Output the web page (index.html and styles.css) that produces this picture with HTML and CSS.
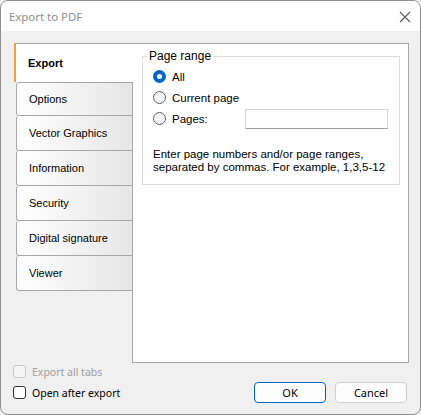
FILE: index.html
```html
<!DOCTYPE html>
<html lang="en">
<head>
  <meta charset="UTF-8" />
  <title>Export to PDF</title>
  <link rel="stylesheet" href="styles.css">
</head>
<body>
  <div class="window">
    <div class="titlebar">
      <span class="title">Export to PDF</span>
      <svg class="close" width="12" height="12" viewBox="0 0 12 12">
        <path d="M1 1 L11 11 M11 1 L1 11" stroke="#5c5c5c" stroke-width="1.1" fill="none"/>
      </svg>
    </div>

    <div class="client">
      <div class="main">
        <div class="tab-strip">
          <div class="tab active">Export</div>
          <div class="tab">Options</div>
          <div class="tab">Vector Graphics</div>
          <div class="tab">Information</div>
          <div class="tab">Security</div>
          <div class="tab">Digital signature</div>
          <div class="tab">Viewer</div>
        </div>

        <div class="panel">
          <fieldset class="group">
            <legend>Page range</legend>
            <label class="radio-row">
              <span class="radio checked"></span>All
            </label>
            <label class="radio-row">
              <span class="radio"></span>Current page
            </label>
            <label class="radio-row">
              <span class="radio"></span>Pages:
              <span class="text-input"></span>
            </label>
            <p class="hint">Enter page numbers and/or page ranges,<br>separated by commas. For example, 1,3,5-12</p>
          </fieldset>
        </div>
      </div>

      <div class="footer">
        <div class="checks">
          <label class="check-row disabled"><span class="checkbox"></span>Export all tabs</label>
          <label class="check-row"><span class="checkbox"></span>Open after export</label>
        </div>
        <div class="buttons">
          <button class="btn default">OK</button>
          <button class="btn">Cancel</button>
        </div>
      </div>
    </div>
  </div>
</body>
</html>
```

FILE: styles.css
```css
* {
  box-sizing: border-box;
}

body {
  margin: 0;
  background: #f0f0f0;
  font-family: 'Liberation Sans', Arial, sans-serif;
  font-size: 11px;
  color: #000;
}

.window {
  width: 421px;
  height: 415px;
  border: 1px solid #8e8e8e;
  border-radius: 8px;
  overflow: hidden;
  background: #f0f0f0;
  display: flex;
  flex-direction: column;
}

.titlebar {
  height: 30px;
  background: #fff;
  display: flex;
  align-items: center;
  justify-content: space-between;
  padding: 0 9px 0 8px;
}

.title {
  font-family: 'Noto Sans', sans-serif;
  font-size: 11.4px;
  color: #8a9090;
}

.close {
  margin-top: 1px;
}

.client {
  flex: 1;
  padding: 12px 11px 0 13px;
  display: flex;
  flex-direction: column;
}

.main {
  display: flex;
  height: 320px;
}

.tab-strip {
  width: 119px;
  margin-right: -1px;
  position: relative;
  z-index: 1;
  display: flex;
  flex-direction: column;
}

.tab {
  height: 35px;
  margin-left: 2px;
  padding-left: 12px;
  display: flex;
  align-items: center;
  border: 1px solid #a6a6a6;
  border-top: none;
  border-radius: 3px 0 0 3px;
  background: linear-gradient(to right, #ffffff, #e6e6e6);
}

.tab.active {
  height: 39px;
  margin-left: 0;
  padding-left: 12px;
  border-top: 1px solid #a6a6a6;
  border-left: 2px solid #f0a040;
  border-right: none;
  border-bottom: none;
  border-radius: 0;
  background: #fff;
  font-weight: bold;
}

.tab.active + .tab {
  border-top: 1px solid #a6a6a6;
  height: 34px;
}

.panel {
  flex: 1;
  background: #fff;
  border: 1px solid #a6a6a6;
  padding: 5px 8px 0 9px;
}

.group {
  margin: 0;
  height: 136px;
  border: 1px solid #dcdcdc;
  padding: 3px 0 0 10px;
}

.group legend {
  padding: 0 2px;
  margin-left: -6px;
  font-size: 12px;
}

.radio-row {
  display: flex;
  align-items: center;
  height: 21px;
  font-size: 11.5px;
}

.radio {
  width: 13px;
  height: 13px;
  border-radius: 50%;
  border: 1px solid #5c5c5c;
  background: #f7f7f7;
  margin-right: 6px;
}

.radio.checked {
  border: 4px solid #0067c0;
  background: #fff;
}

.text-input {
  width: 143px;
  height: 20px;
  margin-left: 37px;
  border: 1px solid #d4d4d4;
  border-bottom-color: #a0a0a0;
  background: #fff;
}

.hint {
  margin: 19px 0 0 0;
  line-height: 13px;
  font-size: 11.5px;
}

.footer {
  flex: 1;
  display: flex;
  justify-content: space-between;
}

.checks {
  display: flex;
  flex-direction: column;
  margin-top: -2px;
  margin-left: -1px;
}

.check-row {
  display: flex;
  align-items: center;
  height: 21px;
  font-family: 'Noto Sans', sans-serif;
  font-size: 10.5px;
}

.check-row.disabled {
  color: #a0a0a0;
}

.checkbox {
  width: 13px;
  height: 13px;
  border: 1px solid #333;
  border-radius: 3px;
  background: #fff;
  margin-right: 6px;
}

.check-row.disabled .checkbox {
  border-color: #c8c8c8;
  background: #f5f5f5;
}

.buttons {
  display: flex;
  gap: 9px;
  padding-top: 19px;
  margin-right: 2px;
}

.btn {
  width: 72px;
  height: 21px;
  font-family: 'Noto Sans', sans-serif;
  font-size: 11px;
  background: #fdfdfd;
  border: 1px solid #d0d0d0;
  border-radius: 4px;
  padding: 0;
  color: #000;
}

.btn.default {
  border-color: #0067c0;
}
```
